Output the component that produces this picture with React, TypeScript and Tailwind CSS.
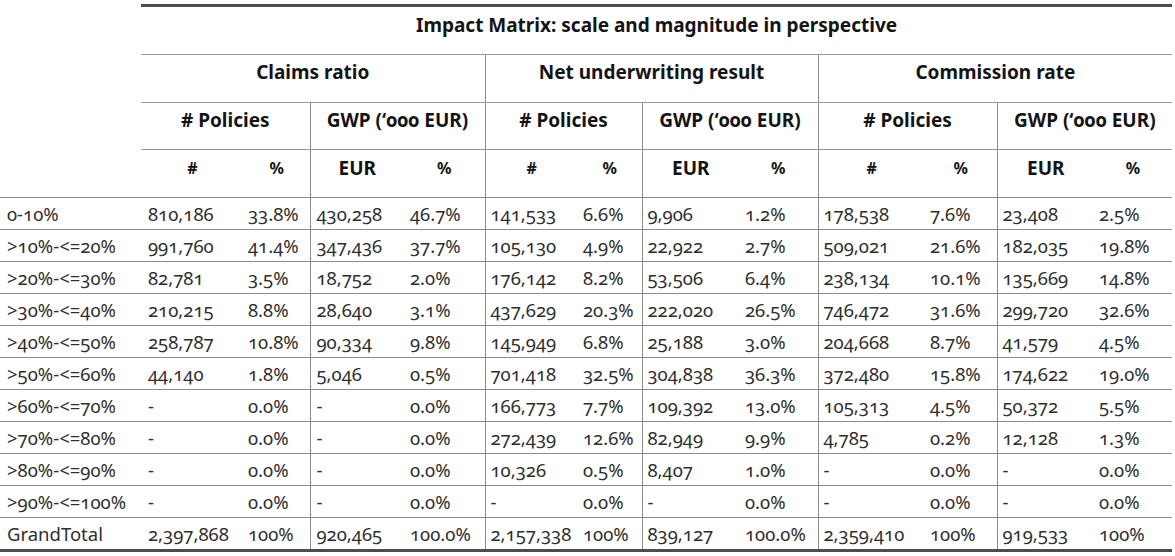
import React from 'react'

const rows: [string, string[]][] = [
  ['0-10%', ['810,186', '33.8%', '430,258', '46.7%', '141,533', '6.6%', '9,906', '1.2%', '178,538', '7.6%', '23,408', '2.5%']],
  ['>10%-<=20%', ['991,760', '41.4%', '347,436', '37.7%', '105,130', '4.9%', '22,922', '2.7%', '509,021', '21.6%', '182,035', '19.8%']],
  ['>20%-<=30%', ['82,781', '3.5%', '18,752', '2.0%', '176,142', '8.2%', '53,506', '6.4%', '238,134', '10.1%', '135,669', '14.8%']],
  ['>30%-<=40%', ['210,215', '8.8%', '28,640', '3.1%', '437,629', '20.3%', '222,020', '26.5%', '746,472', '31.6%', '299,720', '32.6%']],
  ['>40%-<=50%', ['258,787', '10.8%', '90,334', '9.8%', '145,949', '6.8%', '25,188', '3.0%', '204,668', '8.7%', '41,579', '4.5%']],
  ['>50%-<=60%', ['44,140', '1.8%', '5,046', '0.5%', '701,418', '32.5%', '304,838', '36.3%', '372,480', '15.8%', '174,622', '19.0%']],
  ['>60%-<=70%', ['-', '0.0%', '-', '0.0%', '166,773', '7.7%', '109,392', '13.0%', '105,313', '4.5%', '50,372', '5.5%']],
  ['>70%-<=80%', ['-', '0.0%', '-', '0.0%', '272,439', '12.6%', '82,949', '9.9%', '4,785', '0.2%', '12,128', '1.3%']],
  ['>80%-<=90%', ['-', '0.0%', '-', '0.0%', '10,326', '0.5%', '8,407', '1.0%', '-', '0.0%', '-', '0.0%']],
  ['>90%-<=100%', ['-', '0.0%', '-', '0.0%', '-', '0.0%', '-', '0.0%', '-', '0.0%', '-', '0.0%']],
  ['GrandTotal', ['2,397,868', '100%', '920,465', '100.0%', '2,157,338', '100%', '839,127', '100.0%', '2,359,410', '100%', '919,533', '100%']],
]

// per data column: left padding + vertical rule
const cellCls = [
  'pl-[7px]',
  'pl-[4px]',
  'pl-[6px] border-l border-l-[#8c8c8c]',
  'pl-[6px]',
  'pl-[5px] border-l border-l-[#8c8c8c]',
  'pl-[5px]',
  'pl-[5px] border-l border-l-[#8c8c8c]',
  'pl-[6px]',
  'pl-[5px] border-l border-l-[#8c8c8c]',
  'pl-[5px]',
  'pl-[5px] border-l border-l-[#8c8c8c]',
  'pl-[5px]',
]

const groups = ['Claims ratio', 'Net underwriting result', 'Commission rate']

export default function App() {
  return (
    <div className="w-[1175px] h-[556px] bg-white overflow-hidden font-['Noto_Sans',sans-serif] oldstyle-nums">
      <table className="table-fixed border-collapse mt-[4px] w-[1172px]">
        <colgroup>
          <col className="w-[141px]" />
          <col className="w-[103px]" />
          <col className="w-[66px]" />
          <col className="w-[94px]" />
          <col className="w-[81px]" />
          <col className="w-[93px]" />
          <col className="w-[64px]" />
          <col className="w-[97px]" />
          <col className="w-[79px]" />
          <col className="w-[107px]" />
          <col className="w-[72px]" />
          <col className="w-[97px]" />
          <col className="w-[78px]" />
        </colgroup>
        <thead className="text-[19px] font-bold text-[#141414] leading-[24px]">
          <tr className="h-[49px]">
            <td rowSpan={4} className="border-b border-b-[#8c8c8c]" />
            <th colSpan={12} className="align-top pt-[6px] border-t-[3px] border-t-[#4d4d4d] border-b border-b-[#9a9a9a]">
              Impact Matrix: scale and magnitude in perspective
            </th>
          </tr>
          <tr className="h-[48px]">
            {groups.map((g, i) => (
              <th
                key={g}
                colSpan={4}
                className={`align-top pt-[5px] border-b border-b-[#9a9a9a] ${i > 0 ? 'border-l border-l-[#8c8c8c]' : ''}`}
              >
                {g}
              </th>
            ))}
          </tr>
          <tr className="h-[47px]">
            {[0, 1, 2, 3, 4, 5].map(i => (
              <th
                key={i}
                colSpan={2}
                className={`align-top pt-[5px] border-b border-b-[#9a9a9a] whitespace-nowrap ${i > 0 ? 'border-l border-l-[#8c8c8c]' : ''}`}
              >
                {i % 2 === 0 ? '# Policies' : 'GWP (‘000 EUR)'}
              </th>
            ))}
          </tr>
          <tr className="h-[48px]">
            {[0, 1, 2, 3, 4, 5].map(i => (
              <React.Fragment key={i}>
                <th className={`align-top pt-[6px] border-b border-b-[#8c8c8c] ${i > 0 ? 'border-l border-l-[#8c8c8c]' : ''} ${i % 2 === 0 ? 'text-[16px]' : ''}`}>
                  {i % 2 === 0 ? '#' : 'EUR'}
                </th>
                <th className="align-top pt-[6px] border-b border-b-[#8c8c8c] text-[16px]">%</th>
              </React.Fragment>
            ))}
          </tr>
        </thead>
        <tbody className="text-[18.5px] text-[#2e2e2e] leading-[24px]">
          {rows.map(([label, vals], r) => {
            const last = r === rows.length - 1
            const rowBorder = last ? 'border-b-[3px] border-b-[#4d4d4d]' : 'border-b border-b-[#8c8c8c]'
            return (
              <tr key={label} className={last ? 'h-[33px]' : 'h-[32px]'}>
                <td className={`pl-[7px] whitespace-nowrap ${rowBorder}`}>{label}</td>
                {vals.map((v, c) => (
                  <td key={c} className={`whitespace-nowrap ${cellCls[c]} ${rowBorder}`}>
                    {v}
                  </td>
                ))}
              </tr>
            )
          })}
        </tbody>
      </table>
    </div>
  )
}
